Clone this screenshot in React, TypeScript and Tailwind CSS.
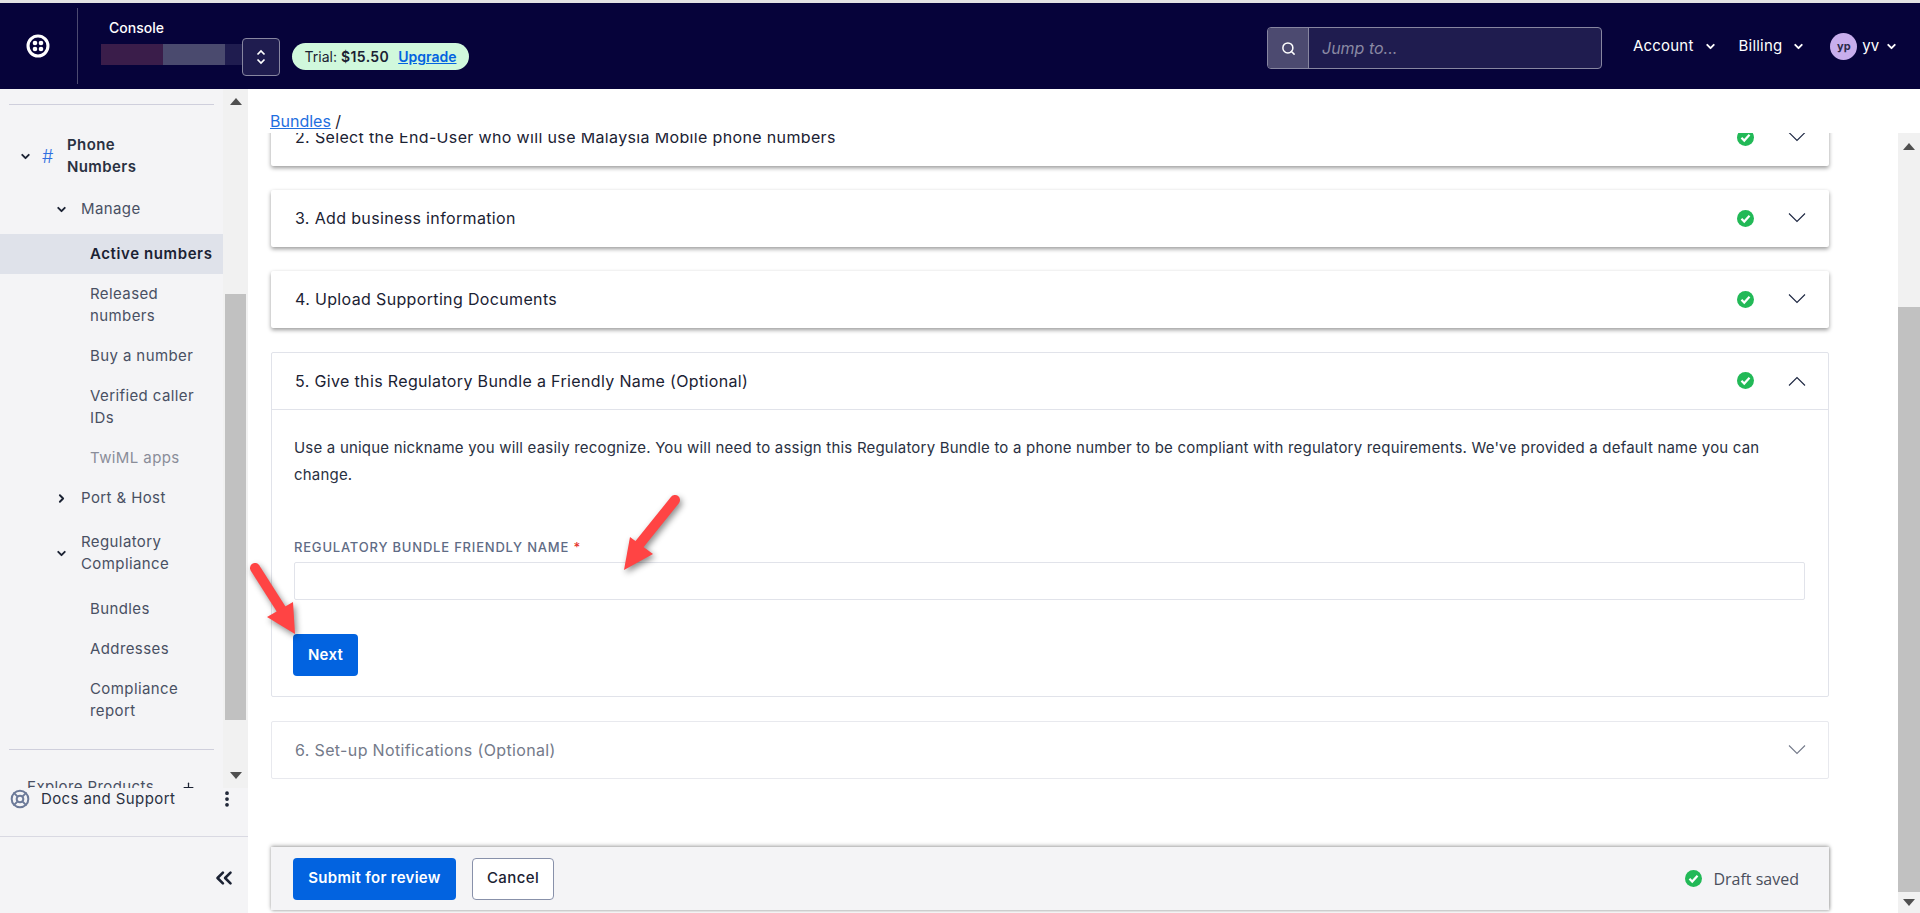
import { ChevronDown, ChevronRight, ChevronsLeft, EllipsisVertical, LifeBuoy, Plus, Search } from 'lucide-react';

const FONT = "font-['Inter','Liberation_Sans',sans-serif]";

function TwilioLogo() {
    return (
        <svg width="24" height="24" viewBox="0 0 24 24" fill="white">
            <path fillRule="evenodd" d="M12 0.5a11.5 11.5 0 1 0 0 23a11.5 11.5 0 0 0 0-23zM12 3.6a8.4 8.4 0 1 1 0 16.8a8.4 8.4 0 0 1 0-16.8z" />
            <circle cx="9" cy="9" r="2.3" />
            <circle cx="15" cy="9" r="2.3" />
            <circle cx="9" cy="15" r="2.3" />
            <circle cx="15" cy="15" r="2.3" />
        </svg>
    );
}

function GreenCheck({ size = 17 }: { size?: number }) {
    return (
        <svg width={size} height={size} viewBox="0 0 16 16" className="shrink-0">
            <circle cx="8" cy="8" r="8" fill="#22b957" />
            <path d="M4.2 8.3l2.6 2.6 5-5.4" fill="none" stroke="white" strokeWidth="2.1" />
        </svg>
    );
}

function Caret({ up = false, color = '#1b2540' }: { up?: boolean; color?: string }) {
    return (
        <svg width="18" height="10" viewBox="0 0 18 10" fill="none" stroke={color} strokeWidth="1.1">
            <path d={up ? 'M1 9.5L9 1.5l8 8' : 'M1 .5l8 8 8-8'} />
        </svg>
    );
}

function ScrollArrow({ down = false }: { down?: boolean }) {
    return (
        <svg width="12" height="7" viewBox="0 0 12 7" fill="#505050">
            <path d={down ? 'M0 0h12L6 7z' : 'M6 0l6 7H0z'} />
        </svg>
    );
}

function RedArrow({ shaft, head }: { shaft: string; head: string }) {
    return (
        <svg className="pointer-events-none absolute top-0 left-0 drop-shadow-[2px_3px_3px_rgba(0,0,0,0.45)]" width="1920" height="913">
            <path d={shaft} stroke="#ff4444" strokeWidth="10" strokeLinecap="round" fill="none" />
            <path d={head} fill="#ff4444" />
        </svg>
    );
}

function NavItem({ label, active, muted }: { label: string; active?: boolean; muted?: boolean }) {
    return (
        <div className={`py-[9px] pr-2 pl-[90px] text-[15px] leading-[22px] ${active ? 'bg-[#dfe2ea] font-semibold tracking-[0.6px] text-[#1b2233]' : muted ? 'tracking-[0.4px] text-[#8a8d99]' : 'tracking-[0.4px] text-[#495063]'}`}>
            {label}
        </div>
    );
}

function Sidebar() {
    return (
        <aside className="flex w-[248px] shrink-0 flex-col bg-[#f4f4f6]">
            <div className="flex min-h-0 flex-1 overflow-hidden">
                <div className="w-[223px] shrink-0">
                    <div className="mt-[15px] ml-[9px] h-px w-[205px] bg-[#cfcfdc]" />
                    <div className="mt-[29px] flex items-center pl-[19px]">
                        <ChevronDown size={13} strokeWidth={3.5} className="text-[#1b2233]" />
                        <span className="ml-[10px] w-[13px] text-[18px] font-light text-[#2f6fe0]">#</span>
                        <span className="ml-[12px] text-[15px] leading-[22px] font-semibold tracking-[0.4px] text-[#2a3142]">Phone<br />Numbers</span>
                    </div>
                    <div className="mt-[11px] flex h-[40px] items-center pl-[55px] text-[15px] tracking-[0.4px] text-[#495063]">
                        <ChevronDown size={13} strokeWidth={3.5} className="text-[#1b2233]" />
                        <span className="ml-[13px]">Manage</span>
                    </div>
                    <div className="mt-[5px]">
                        <NavItem label="Active numbers" active />
                        <NavItem label="Released numbers" />
                        <NavItem label="Buy a number" />
                        <NavItem label="Verified caller IDs" />
                        <NavItem label="TwiML apps" muted />
                    </div>
                    <div className="flex h-[40px] items-center pl-[55px] text-[15px] tracking-[0.4px] text-[#495063]">
                        <ChevronRight size={13} strokeWidth={3.5} className="text-[#1b2233]" />
                        <span className="ml-[13px]">Port &amp; Host</span>
                    </div>
                    <div className="mt-[4px] flex items-center py-[9px] pl-[55px] text-[15px] leading-[22px] tracking-[0.4px] text-[#495063]">
                        <ChevronDown size={13} strokeWidth={3.5} className="text-[#1b2233]" />
                        <span className="ml-[13px]">Regulatory<br />Compliance</span>
                    </div>
                    <div className="mt-[5px]">
                        <NavItem label="Bundles" />
                        <NavItem label="Addresses" />
                        <NavItem label="Compliance report" />
                    </div>
                    <div className="mt-[18px] ml-[9px] h-px w-[205px] bg-[#cfcfdc]" />
                    <div className="mt-[26px] flex items-center pl-[27px] text-[15px] leading-[22px] tracking-[0.4px] text-[#495063]">
                        <span>Explore Products</span>
                        <Plus size={15} strokeWidth={2} className="ml-[27px] text-[#1b2233]" />
                    </div>
                </div>
                <div className="flex w-[25px] shrink-0 flex-col bg-[#f1f1f1] pl-[2px]">
                    <div className="flex h-[205px] w-[21px] justify-center pt-[9px]">
                        <ScrollArrow />
                    </div>
                    <div className="h-[426px] w-[21px] bg-[#c1c1c1]" />
                    <div className="flex w-[21px] flex-1 items-end justify-center pb-[9px]">
                        <ScrollArrow down />
                    </div>
                </div>
            </div>
            <div className="flex h-[49px] shrink-0 items-start border-b border-[#d9d9e2] pt-px">
                <LifeBuoy size={20} strokeWidth={2.4} className="ml-[10px] text-[#6c7a99]" />
                <span className="ml-[11px] text-[15px] leading-[20px] tracking-[0.4px] text-[#2a3142]">Docs and Support</span>
                <EllipsisVertical size={20} strokeWidth={2.5} className="ml-[42px] text-[#1b2233]" />
            </div>
            <div className="flex h-[76px] shrink-0 items-center justify-end pt-[6px] pr-[11px]">
                <ChevronsLeft size={26} strokeWidth={2.4} className="text-[#1b2233]" />
            </div>
        </aside>
    );
}

function StepCard({ title }: { title: string }) {
    return (
        <div className="flex h-[57px] shrink-0 items-center rounded-[2px] bg-white pr-[23px] pb-px pl-[24px] shadow-[0_2px_4px_rgba(0,0,0,0.4)]">
            <span className="flex-1 text-[16px] tracking-[0.35px] text-[#1b2233]">{title}</span>
            <GreenCheck />
            <span className="ml-[34px] flex w-[18px] justify-center"><Caret /></span>
        </div>
    );
}

function Main() {
    return (
        <main className="flex min-w-0 flex-1">
            <div className="flex min-w-0 flex-1 flex-col pl-[23px]">
                <div className="h-[44px] shrink-0 pt-[23px] text-[16px] leading-[19px] text-[#1b2233]">
                    <a className="-ml-px text-[#1f6fe0] underline">Bundles</a> /
                </div>
                <div className="flex min-h-0 flex-1 flex-col pr-[69px]">
                    <div className="-mx-2 h-[670px] shrink-0 overflow-hidden px-2">
                        <div className="-mt-[24px] flex flex-col gap-[24px]">
                            <StepCard title="2. Select the End-User who will use Malaysia Mobile phone numbers" />
                            <StepCard title="3. Add business information" />
                            <StepCard title="4. Upload Supporting Documents" />
                            <section className="rounded-[2px] border border-[#e1e3ea] bg-white">
                                <div className="flex h-[57px] items-center border-b border-[#e1e3ea] pr-[22px] pb-px pl-[23px]">
                                    <span className="flex-1 text-[16px] tracking-[0.35px] text-[#1b2233]">5. Give this Regulatory Bundle a Friendly Name (Optional)</span>
                                    <GreenCheck />
                                    <span className="ml-[34px] flex w-[18px] justify-center"><Caret up /></span>
                                </div>
                                <div className="pt-[24px] pr-[23px] pl-[22px]">
                                    <p className="text-[15px] leading-[27px] tracking-[0.2px] text-[#2a3142]">
                                        Use a unique nickname you will easily recognize. You will need to assign this Regulatory Bundle to a phone number to be compliant with regulatory requirements. We've provided a default name you can change.
                                    </p>
                                    <label className="mt-[49px] block text-[13px] leading-[20px] font-medium tracking-[0.8px] text-[#606b85]">
                                        REGULATORY BUNDLE FRIENDLY NAME <span className="text-[#e5342b]">*</span>
                                    </label>
                                    <div className="mt-[5px] h-[38px] rounded-[2px] border border-[#e1e3ea] bg-white" />
                                    <button className="mt-[34px] -ml-px h-[42px] w-[65px] rounded-[4px] bg-[#0263e0] text-[15px] font-semibold tracking-[0.3px] text-white">Next</button>
                                    <div className="h-[20px]" />
                                </div>
                            </section>
                            <section className="flex h-[58px] shrink-0 items-center rounded-[2px] border border-[#e8e9ee] bg-white pr-[22px] pb-px pl-[23px]">
                                <span className="flex-1 text-[16px] tracking-[0.35px] text-[#747a8a]">6. Set-up Notifications (Optional)</span>
                                <Caret color="#747a8a" />
                            </section>
                        </div>
                    </div>
                    <div className="mt-auto mb-[3px] flex h-[63px] shrink-0 items-center bg-[#f4f4f6] pr-[30px] pl-[22px] shadow-[0_-1px_4px_rgba(0,0,0,0.35),1px_1px_3px_rgba(0,0,0,0.2)]">
                        <button className="h-[42px] w-[163px] rounded-[4px] bg-[#0263e0] text-[15px] font-semibold tracking-[0.3px] text-white">Submit for review</button>
                        <button className="ml-[16px] h-[42px] w-[82px] rounded-[4px] border border-[#8891aa] bg-white text-[15px] font-medium tracking-[0.4px] text-[#1b2233]">Cancel</button>
                        <span className="ml-auto flex items-center gap-[11px] font-['Open_Sans',sans-serif] text-[16px] text-[#4a4f5c]">
                            <GreenCheck />
                            Draft saved
                        </span>
                    </div>
                </div>
            </div>
            <div className="mt-[44px] flex w-[22px] shrink-0 flex-col items-center bg-[#f1f1f1]">
                <div className="flex h-[174px] w-full justify-center pt-[10px]">
                    <ScrollArrow />
                </div>
                <div className="h-[585px] w-full bg-[#c1c1c1]" />
                <div className="flex flex-1 items-center">
                    <ScrollArrow down />
                </div>
            </div>
        </main>
    );
}

function Header() {
    return (
        <header className="flex h-[86px] shrink-0 items-center bg-[#06033a] text-white">
            <div className="flex w-[77px] justify-center pr-[1px]"><TwilioLogo /></div>
            <div className="h-[76px] w-px bg-[#4c4a70]" />
            <div className="ml-[23px] w-[141px] pt-[6px] pb-[16px]">
                <div className="pl-[8px] text-[14px] font-medium">Console</div>
                <div className="mt-[6px] flex h-[21px]">
                    <div className="w-[62px] bg-[#3a1d4a]" />
                    <div className="w-[62px] bg-[#4a4a6e]" />
                    <div className="w-[17px] bg-[#1f1c4f]" />
                </div>
            </div>
            <button className="mt-[22px] flex h-[38px] w-[38px] flex-col items-center justify-center rounded-[4px] border border-[#8786a0] bg-[#1f1c4f]">
                <svg width="10" height="16" viewBox="0 0 10 16" fill="none" stroke="white" strokeWidth="1.7"><path d="M1.5 5.5L5 2l3.5 3.5M1.5 10.5L5 14l3.5-3.5" /></svg>
            </button>
            <div className="mt-[21px] ml-[12px] flex h-[27px] w-[177px] items-center justify-center rounded-full bg-[#d0f8dc] text-[14px] text-[#1b2233]">
                <span>Trial:</span>
                <span className="ml-[4px] font-semibold tracking-[0.4px]">$15.50</span>
                <a className="ml-[9px] font-semibold text-[#0263e0] underline">Upgrade</a>
            </div>
            <div className="mt-[4px] ml-[798px] flex h-[42px] w-[335px] overflow-hidden rounded-[4px] border border-[#8786a0] bg-[#1f1c4f]">
                <div className="flex w-[41px] items-center justify-center border-r border-[#8786a0] bg-[#4c4a70]">
                    <Search size={15} strokeWidth={2.4} />
                </div>
                <span className="pl-[13px] text-[16px] leading-[40px] text-[#8a89a3] italic">Jump to...</span>
            </div>
            <span className="ml-[31px] text-[15px] tracking-[0.2px]">Account</span>
            <ChevronDown size={13} strokeWidth={3.5} className="ml-[10px]" />
            <span className="ml-[22px] text-[15px] tracking-[0.2px]">Billing</span>
            <ChevronDown size={13} strokeWidth={3.5} className="ml-[10px]" />
            <span className="ml-[25px] flex h-[27px] w-[27px] items-center justify-center rounded-full bg-[#c8aeed] text-[11px] font-bold text-[#2a2a4a]">yp</span>
            <span className="ml-[5px] text-[15px]">yv</span>
            <ChevronDown size={13} strokeWidth={3.5} className="ml-[6px]" />
        </header>
    );
}

export default function App() {
    return (
        <div className={`relative flex h-[913px] w-[1920px] flex-col overflow-hidden bg-white ${FONT}`}>
            <div className="h-[3px] shrink-0 bg-[#e3e3e3]" />
            <Header />
            <div className="flex min-h-0 flex-1">
                <Sidebar />
                <Main />
            </div>
            {/* annotation arrows sit on top of the screenshot */}
            <RedArrow shaft="M675 500L638 546" head="M630 537L653 554L624 570Z" />
            <RedArrow shaft="M255 568L283 612" head="M293 602L267 617L295 634Z" />
        </div>
    );
}
